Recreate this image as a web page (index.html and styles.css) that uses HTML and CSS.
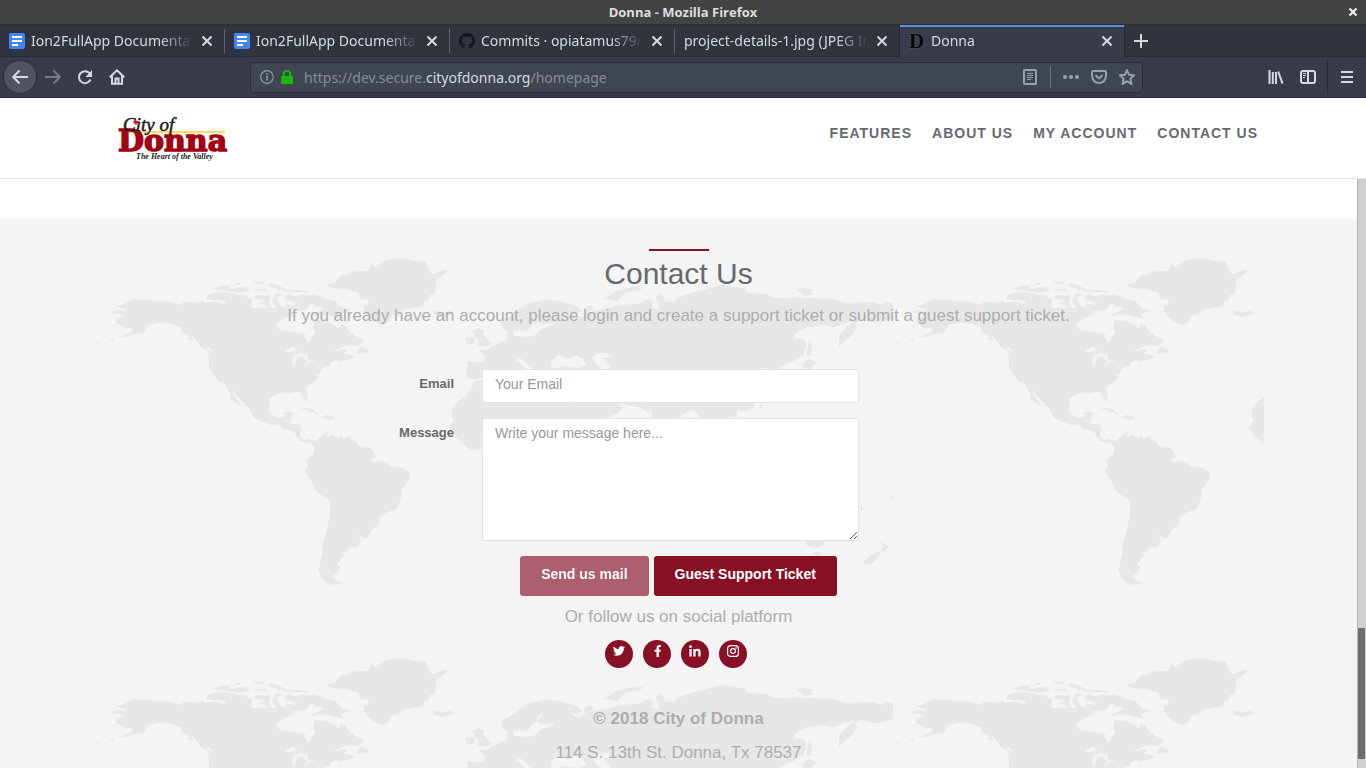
FILE: index.html
```html
<!DOCTYPE html>
<html lang="en">
<head>
<meta charset="utf-8">
<title>Donna</title>
<link rel="stylesheet" href="styles.css">
</head>
<body>
<div class="titlebar">
  <span class="titlebar-text">Donna - Mozilla Firefox</span>
  <button class="icon-btn titlebar-close" aria-label="Close window"><svg width="10" height="10" viewBox="0 0 10 10"><path d="M1.5 1.5l7 7M8.500 1.500l-7 7" stroke="#eee" stroke-width="2.200"/></svg></button>
</div>

<div class="tabs">
  <div class="tab">
    <svg class="favicon" width="16" height="16" viewBox="0 0 16 16"><rect width="16" height="16" rx="2" fill="#4285f4"/><path d="M3 4h10M3 8h10M3 12h6" stroke="#fff" stroke-width="2"/></svg>
    <span class="tab-label">Ion2FullApp Documentation</span>
    <button class="icon-btn tab-close" aria-label="Close tab"><svg width="10" height="10" viewBox="0 0 10 10"><path d="M.5 .5l9 9M9.500 .5l-9 9"/></svg></button>
  </div>
  <div class="tab">
    <svg class="favicon" width="16" height="16" viewBox="0 0 16 16"><rect width="16" height="16" rx="2" fill="#4285f4"/><path d="M3 4h10M3 8h10M3 12h6" stroke="#fff" stroke-width="2"/></svg>
    <span class="tab-label">Ion2FullApp Documentation</span>
    <button class="icon-btn tab-close" aria-label="Close tab"><svg width="10" height="10" viewBox="0 0 10 10"><path d="M.5 .5l9 9M9.500 .5l-9 9"/></svg></button>
  </div>
  <div class="tab">
    <svg class="favicon" width="16" height="16" viewBox="0 0 16 16"><path fill="#15171b" d="M8 0C3.580 0 0 3.580 0 8c0 3.540 2.290 6.530 5.470 7.590.4.070.55-.17.55-.38 0-.19-.01-.82-.01-1.490-2.010.37-2.530-.49-2.690-.94-.09-.23-.48-.94-.82-1.130-.28-.15-.68-.52-.01-.53.63-.01 1.080.58 1.230.82.72 1.210 1.870.87 2.330.66.070-.52.28-.87.51-1.070-1.780-.2-3.640-.89-3.640-3.950 0-.87.31-1.590.82-2.150-.08-.2-.36-1.020.08-2.120 0 0 .67-.21 2.200.82a7.600 7.600 0 0 1 4 0c1.530-1.040 2.200-.82 2.200-.82.44 1.100.16 1.920.08 2.120.51.56.82 1.270.82 2.150 0 3.070-1.870 3.750-3.650 3.950.29.25.54.73.54 1.480 0 1.070-.01 1.930-.01 2.200 0 .21.15.46.55.38A8 8 0 0 0 16 8c0-4.420-3.580-8-8-8z"/></svg>
    <span class="tab-label">Commits · opiatamus79/citydonna</span>
    <button class="icon-btn tab-close" aria-label="Close tab"><svg width="10" height="10" viewBox="0 0 10 10"><path d="M.5 .5l9 9M9.500 .5l-9 9"/></svg></button>
  </div>
  <div class="tab">
    <span class="tab-label">project-details-1.jpg (JPEG Image)</span>
    <button class="icon-btn tab-close" aria-label="Close tab"><svg width="10" height="10" viewBox="0 0 10 10"><path d="M.5 .5l9 9M9.500 .5l-9 9"/></svg></button>
  </div>
  <div class="tab tab-active">
    <svg class="favicon" width="16" height="16" viewBox="0 0 16 16"><text x="0" y="15" class="favicon-letter">D</text></svg>
    <span class="tab-label">Donna</span>
    <button class="icon-btn tab-close" aria-label="Close tab"><svg width="10" height="10" viewBox="0 0 10 10"><path d="M.5 .5l9 9M9.500 .5l-9 9"/></svg></button>
  </div>
  <button class="icon-btn new-tab" aria-label="New tab"><svg width="14" height="14" viewBox="0 0 14 14"><path d="M7 0v14M0 7h14" stroke="#d3dae3" stroke-width="2"/></svg></button>
</div>

<div class="toolbar">
  <button class="icon-btn back" aria-label="Back"><svg width="16" height="16" viewBox="0 0 16 16"><path d="M16 8H1.500M7.500 1.500L1.200 8l6.300 6.500" class="line"/></svg></button>
  <button class="icon-btn tool dim" aria-label="Forward"><svg width="16" height="16" viewBox="0 0 16 16"><path d="M0 8h14.500M8.500 1.500L14.800 8l-6.300 6.500" class="line"/></svg></button>
  <button class="icon-btn tool" aria-label="Reload"><svg width="16" height="16" viewBox="0 0 16 16"><path d="M13.500 10.500A6 6 0 1 1 12.500 4.200L14 6" class="line"/><path d="M15 1v7H8.500z" fill="#d3dae3"/></svg></button>
  <button class="icon-btn tool" aria-label="Home"><svg width="16" height="16" viewBox="0 0 16 16"><path d="M.8 8.300L8 1.300l7.200 7M3 7v7.700h10V7M6.500 14V9.500h3V14" class="line"/></svg></button>
  <div class="spring"></div>
  <div class="urlbar">
    <svg width="14" height="14" viewBox="0 0 14 14"><circle cx="7" cy="7" r="6.300" fill="none" stroke="#9196a1" stroke-width="1.200"/><path d="M7 6v4.500M7 3.200v1.600" stroke="#9196a1" stroke-width="1.600"/></svg>
    <svg width="12" height="14" viewBox="0 0 12 14"><path d="M2.800 7V4a3.200 3.200 0 0 1 6.400 0v3" fill="none" stroke="#12bc00" stroke-width="2"/><rect y="6" width="12" height="8" rx="1" fill="#12bc00"/></svg>
    <span class="url" role="textbox" aria-label="Address">https://dev.secure.<b>cityofdonna.org</b>/homepage</span>
    <svg width="14" height="16" viewBox="0 0 14 16"><rect x="1" y="1" width="12" height="14" rx="1" class="dimline"/><path d="M4 4.500h6M4 6.500h6M4 8.500h6M4 10.500h4" stroke="#9a9faa"/></svg>
    <span class="url-divider"></span>
    <svg width="16" height="16" viewBox="0 0 16 16" fill="#9a9faa"><circle cx="2" cy="8" r="2"/><circle cx="8" cy="8" r="2"/><circle cx="14" cy="8" r="2"/></svg>
    <svg width="16" height="16" viewBox="0 0 16 16"><path d="M2 2h12q1 0 1 1v4a7 7 0 0 1-14 0V3q0-1 1-1zM4.500 6.300L8 9.500l3.500-3.200" class="dimline"/></svg>
    <svg width="16" height="16" viewBox="0 0 16 16"><path d="M8 1.300l2.100 4.500 4.900.6-3.600 3.400.9 4.900L8 12.300l-4.300 2.400.9-4.900L1 6.400l4.900-.6z" class="dimline"/></svg>
  </div>
  <div class="spring"></div>
  <button class="icon-btn tool" aria-label="Library"><svg width="16" height="16" viewBox="0 0 16 16"><path d="M1.500 1v14M4.800 3v12M8 3v12M10.200 2.500l4.300 12.200" class="line"/></svg></button>
  <button class="icon-btn tool" aria-label="Sidebars"><svg width="16" height="16" viewBox="0 0 16 16"><rect x="1" y="2" width="14" height="12" rx="2" class="line"/><path d="M8 2v12" class="line"/><path d="M3 4.500h3M3 6.500h3M3 8.500h2" stroke="#d3dae3"/></svg></button>
  <span class="menu-divider"></span>
  <button class="icon-btn tool menu" aria-label="Menu"><svg width="12" height="12" viewBox="0 0 12 12"><path d="M0 1h12M0 6h12M0 11h12" stroke="#d3dae3" stroke-width="2"/></svg></button>
</div>

<header class="site-header">
  <div class="header-inner">
    <a href="#" class="logo" aria-label="City of Donna">
      <svg width="112" height="44" viewBox="0 0 112 44">
        <path d="M10 16h97" stroke="#ffdf52" stroke-width="2"/>
        <text x="0" y="35" class="logo-name">Donna</text>
        <text x="5" y="15" class="logo-city">City of</text>
        <path d="M15 6l2-2 2 1 2 0-3 4z" fill="#e11b22"/>
        <text x="18" y="43" class="logo-tag">The Heart of the Valley</text>
      </svg>
    </a>
    <nav class="site-nav">
      <a href="#">FEATURES</a>
      <a href="#">ABOUT US</a>
      <a href="#">MY ACCOUNT</a>
      <a href="#">CONTACT US</a>
    </nav>
  </div>
</header>

<div class="viewport">
  <main class="content">
    <section class="contact">
      <div class="container">
        <svg class="map" aria-hidden="true">
          <defs>
            <pattern id="world" width="800" height="400" patternUnits="userSpaceOnUse">
              <g transform="translate(-14 -9) scale(.33333)" fill="#e7e7e7">
                <path d="M104 198L128 194 148 183 165 176 175 182 205 181 270 186 300 194 312 186 360 187 366 182 376 187 398 187 404 184 438 193 430 180 400 180 378 176 386 162 402 158 436 157 460 160 470 165 500 165 504 175 514 178 516 204 562 204 558 194 540 192 552 184 550 178 520 176 532 164 556 168 568 164 572 174 566 186 576 204 590 204 576 186 580 172 592 176 600 196 620 204 614 192 646 194 642 184 620 182 614 168 630 162 652 172 660 164 710 164 740 178 768 184 776 196 788 204 812 210 790 220 780 222 796 238 780 234 750 226 720 222 700 228 690 226 712 216 732 206 720 200 700 200 708 190 690 192 680 210 640 214 636 224 662 232 630 228 610 236 586 254 600 270 640 276 676 282 674 292 684 308 692 306 696 290 706 278 700 262 704 240 740 244 770 262 778 264 786 250 822 285 850 300 838 316 806 318 784 320 762 334 790 328 804 330 790 342 820 346 818 354 776 366 768 360 750 368 748 380 730 380 720 394 722 402 708 406 714 416 676 446 684 470 682 488 672 476 662 456 640 454 630 460 605 458 590 462 568 476 568 512 574 522 590 534 612 530 614 516 638 516 634 540 628 550 660 554 664 560 660 590 672 600 688 596 698 602 712 600 740 576 744 596 750 584 770 590 774 598 780 586 792 594 805 592 815 584 812 600 830 606 840 620 864 620 880 634 888 652 870 662 884 666 896 660 920 670 940 682 956 680 976 688 990 702 988 720 964 750 962 780 948 810 930 814 900 830 898 850 880 866 862 892 850 896 836 882 843 906 834 920 804 924 802 936 784 936 794 944 770 974 782 980 774 994 760 1008 770 1022 788 1028 762 1035 742 1030 724 1012 716 990 722 960 728 940 728 910 740 870 748 830 752 786 740 774 712 758 692 720 675 694 682 680 680 662 700 642 702 620 694 606 682 610 662 602 640 574 612 568 596 552 576 556 540 544 516 526 512 510 486 484 454 448 464 472 488 502 470 492 448 474 452 462 432 430 416 424 386 382 388 344 382 334 360 318 340 290 332 286 342 304 326 298 324 284 306 276 304 264 270 250 232 248 204 256 190 278 118 293 160 272 150 264 134 264 106 248 110 236 136 226 92 216 110 210 136 212 136 206z"/>
                <path d="M735 133L762 130 780 108 806 102 820 92 866 93 874 72 886 80 914 62 960 55 1002 62 1036 64 1046 90 1058 102 1072 98 1088 88 1104 94 1084 108 1066 124 1072 138 1064 144 1064 164 1048 166 1046 184 1036 182 1028 198 980 206 960 220 936 226 922 250 904 254 872 238 850 214 852 196 866 194 864 178 846 180 834 158 800 146 770 148z"/>
                <path d="M398 148L420 138 444 136 454 148 474 142 500 142 508 154 480 158 460 156 440 152zM460 134L480 126 482 136zM516 126L540 123 556 130 530 132zM522 148h36v6h-36zM568 128L590 134 622 150 684 152 680 157 616 156 590 146 568 140zM580 164l18-4 10 6-18 6zM826 340L846 318 862 328 866 340zM1058 213L1078 212 1084 218 1112 212 1122 218 1104 228 1088 232 1062 224zM42 306l18 1-8 4zM84 304l10-4 8-6-2 10zM96 258l6-3 4 3-6 2zM658 508L680 504 702 510 718 524 696 518 678 510zM726 532L738 525 756 528 764 538 744 540zM774 538l6-4 2 5zM696 493l6 1-2 4zM698 542l6 1-2 5z"/>
                <path fill="#f4f4f4" d="M612 334L636 320 656 332 640 334 632 338zM638 377C634 350 645 342 660 340L682 344 684 362 676 362 670 352 660 350 652 354 644 377zM674 378L684 362 712 358 692 366zM378 320L390 324 398 334 392 336z"/>
              </g>
              <g transform="translate(366 -9) scale(.33333)" fill="#e7e7e7">
                <path d="M22 414L18 402 24 364 70 366 78 350 56 332 84 328 110 312 140 300 142 276 130 268 122 245 150 228 200 190 250 180 300 184 345 196 366 212 350 222 330 218 352 234 376 226 372 204 390 194 402 206 386 216 440 206 476 196 500 194 540 190 560 176 580 182 576 204 600 208 592 184 586 168 606 160 614 184 640 188 652 174 690 160 740 146 790 135 858 146 856 158 920 162 946 174 1000 172 1110 176 1160 190 1240 186 1262 194 1276 186 1298 190 1300 208 1298 238 1250 250 1200 240 1186 250 1190 262 1176 284 1136 320 1138 285 1160 262 1185 240 1150 250 1120 262 1090 256 1040 262 1005 280 1002 294 1030 296 1040 310 1034 340 1000 364 960 380 950 390 905 384 906 440 888 490 880 505 860 512 832 512 830 534 805 530 800 550 740 550 718 532 700 508 686 514 655 534 650 570 600 570 576 534 574 514 560 516 545 504 500 494 478 488 488 508 470 522 430 538 360 560 346 534 328 490 326 490 358 540 400 570 380 620 300 740 210 820 180 780 160 630 66 626 32 631 -10 595 -34 565 -20 540 -26 516 -12 490 24 460 46 422 80 420 100 400 120 370 140 364 180 388 80 408 46 418z"/>
                <path d="M16 294L36 290 46 300 36 312 20 312zM36 272L56 264 72 270 70 284 88 302 97 312 80 318 50 316 60 304 44 288zM433 176L470 152 520 140 550 140 540 150 500 156 470 184zM1008 148L1036 144 1062 150 1050 156 1060 166 1030 166zM1046 300L1056 322 1052 348 1040 346zM1030 368L1050 356 1070 366 1050 388 1030 384zM898 494l12-2-8 18-6-6zM1302 306l20 1-8 4zM1030 890L1066 902 1098 902 1088 918 1064 924 1042 918zM1060 936L1086 936 1072 950zM1260 896L1272 912 1288 918 1276 934 1260 934 1270 922zM1212 964L1240 942 1258 932 1262 942 1232 974 1212 972zM1196 798l16 10-6 4zM1286 778l10-10 6 2-12 10z"/>
                <path fill="#f4f4f4" d="M254 216L232 232 230 246 214 254 204 272 160 270 162 288 200 292 226 286 238 270 280 256 282 250 240 252 232 242zM164 352L178 352 196 368 218 380 214 390 196 386 178 368zM272 380L276 362 292 346 314 350 322 358 348 346 366 354 382 378 352 384 310 378 288 386zM396 354L408 340 440 338 456 352 432 354 434 366 450 376 448 388 422 388z"/>
              </g>
            </pattern>
          </defs>
          <rect width="100%" height="100%" fill="url(#world)"/>
        </svg>
        <div class="rule"></div>
        <h2>Contact Us</h2>
        <p class="lead">If you already have an account, please login and create a support ticket or submit a guest support ticket.</p>
        <form class="form">
          <label for="email">Email</label>
          <input id="email" type="email" placeholder="Your Email">
          <label for="message">Message</label>
          <textarea id="message" placeholder="Write your message here..."></textarea>
        </form>
        <div class="actions">
          <button class="btn btn-disabled" disabled>Send us mail</button>
          <button class="btn">Guest Support Ticket</button>
        </div>
        <p class="follow">Or follow us on social platform</p>
        <div class="social">
          <a href="#" aria-label="Twitter"><svg width="12" height="12" viewBox="0 0 24 24"><path fill="#fff" d="M24 4.600a10 10 0 0 1-2.800.8 5 5 0 0 0 2.100-2.700 10 10 0 0 1-3.100 1.200 4.900 4.900 0 0 0-8.400 4.500A14 14 0 0 1 1.700 3.100a4.900 4.900 0 0 0 1.500 6.600 5 5 0 0 1-2.200-.6 4.900 4.900 0 0 0 3.900 4.900 5 5 0 0 1-2.200.1 4.900 4.900 0 0 0 4.600 3.400A10 10 0 0 1 0 19.500 14 14 0 0 0 7.500 21.700c9.100 0 14.300-7.700 14-14.600A10 10 0 0 0 24 4.600z"/></svg></a>
          <a href="#" aria-label="Facebook"><svg width="12" height="12" viewBox="0 0 12 12"><path fill="#fff" d="M5.500 12V6.800h-2V4.700h2V3.200C5.500 1.200 6.700 0 8.500 0H10v2H9C8.200 2 7.900 2.400 7.900 3.100v1.600h2l-.3 2.100H7.900V12z"/></svg></a>
          <a href="#" aria-label="LinkedIn"><svg width="12" height="12" viewBox="0 0 12 12"><path fill="#fff" d="M.4 4h2.300v7.500H.4zM4.300 4h2.200v1C7 4.200 7.800 3.800 8.800 3.800c2.200 0 2.800 1.400 2.800 3.500v4.200H9.300V7.700c0-1-.1-2-1.200-2s-1.500.8-1.500 1.900v3.900H4.300z"/><circle cx="1.500" cy="1.700" r="1.400" fill="#fff"/></svg></a>
          <a href="#" aria-label="Instagram"><svg width="12" height="12" viewBox="0 0 12 12" fill="none" stroke="#fff"><rect x=".6" y=".6" width="10.800" height="10.800" rx="3" stroke-width="1.200"/><circle cx="6" cy="6" r="2.400" stroke-width="1.200"/><circle cx="9" cy="3" r=".4"/></svg></a>
        </div>
        <footer class="footer">
          <p class="copyright">© 2018 City of Donna</p>
          <p>114 S. 13th St. Donna, Tx 78537</p>
        </footer>
      </div>
    </section>
  </main>
  <div class="scrollbar"><div class="thumb"></div></div>
</div>
</body>
</html>
```

FILE: styles.css
```css
* { box-sizing: border-box; }

body {
  margin: 0;
  height: 100vh;
  display: flex;
  flex-direction: column;
  overflow: hidden;
  background: #fff;
  font-family: "Liberation Sans", Arial, sans-serif;
  color: #666a6d;
}

p, h2 { margin: 0; }

.icon-btn {
  display: flex;
  align-items: center;
  justify-content: center;
  flex: none;
  padding: 0;
  border: 0;
  background: none;
}

.titlebar,
.tabs,
.toolbar {
  flex: none;
  display: flex;
  align-items: center;
  font-family: "Noto Sans", sans-serif;
  font-size: 14px;
}

/* Window title */
.titlebar {
  height: 24px;
  padding: 0 8px 0 18px;
  background: #434343;
  color: #dedede;
  font-family: "Open Sans", "Noto Sans", sans-serif;
  font-weight: 700;
  font-size: 13px;
}
.titlebar-text { flex: 1; text-align: center; }

/* Tab strip */
.tabs {
  height: 33px;
  align-items: stretch;
  background: #2f343f;
  color: #d3dae3;
  border-top: 1px solid #2b2f3a;
  border-bottom: 1px solid #262a35;
}
.tab {
  display: flex;
  align-items: center;
  gap: 6px;
  flex: 0 1 225px;
  min-width: 0;
  padding: 0 13px 0 9px;
  background: linear-gradient(#5d626d, #5d626d) right center / 1px 24px no-repeat;
}
.tab:nth-child(4) { background: none; }
.tab-active {
  margin-bottom: -1px;
  padding-bottom: 3px;
  background: #383c4a;
  border-top: 2px solid #5294e2;
  box-shadow: -1px 0 #262a35;
  border-right: 1px solid #262a35;
  padding-right: 12px;
}
.favicon { flex: none; }
.favicon-letter {
  font: 700 21px "Liberation Serif", serif;
  fill: #050505;
  stroke: #50535c;
  stroke-width: 1px;
  paint-order: stroke;
}
.tab-label {
  flex: 1;
  min-width: 0;
  overflow: hidden;
  white-space: nowrap;
  mask-image: linear-gradient(to left, transparent 3px, #000 36px);
}
.tab-close path { stroke: #d3dae3; stroke-width: 2; }
.new-tab { width: 32px; }

/* Navigation toolbar */
.toolbar {
  height: 41px;
  padding: 0 3px;
  background: #383c4a;
  border-bottom: 1px solid #262a35;
}
.line { fill: none; stroke: #d3dae3; stroke-width: 2; }
.dimline { fill: none; stroke: #9a9faa; stroke-width: 2; }
.back {
  width: 34px;
  height: 34px;
  border-radius: 50%;
  background: #505461;
  border: 1px solid #2b2e39;
}
.tool { width: 32px; height: 32px; }
.dim { opacity: .4; }
.spring { flex: 2; }
.urlbar {
  flex: 15;
  display: flex;
  align-items: center;
  gap: 7px;
  height: 31px;
  padding: 0 4px 0 9px;
  background: #404552;
  border: 1px solid #2b2e39;
  border-radius: 4px;
}
.urlbar svg { flex: none; }
.urlbar svg + svg { margin-right: 4px; }
.url-divider ~ svg { margin: 0 3px 0 2px; }
.urlbar .url-divider ~ svg + svg { margin-right: 3px; }
.url { flex: 1; color: #878c98; }
.url b { font-weight: 400; color: #d3dae3; }
.url-divider { width: 1px; height: 22px; margin: 0 3px 0 6px; background: #6a6e7a; }
.menu-divider { width: 1px; height: 34px; margin: 0 3px; background: #2b2e39; }

/* Site header */
.site-header { flex: none; border-bottom: 1px solid #e7e7e7; background: #fff; }
.header-inner {
  max-width: 1170px;
  height: 80px;
  margin: 0 auto;
  padding-left: 20px;
  display: flex;
  align-items: center;
  justify-content: space-between;
}
.logo svg { display: block; overflow: visible; }
.logo-name {
  font: 700 30px "DejaVu Serif", serif;
  fill: #a30013;
  stroke: #a30013;
  stroke-width: 1.500px;
}
.logo-city { font: italic 400 19px "Liberation Serif", serif; fill: #1b1b1b; stroke: #1b1b1b; stroke-width: .5px; }
.logo-tag { font: italic 700 8px "Liberation Serif", serif; fill: #1b1b1b; }
.site-nav { display: flex; padding-bottom: 10px; }
.site-nav a {
  padding: 0 10px;
  color: #666a6d;
  font-size: 14px;
  font-weight: 700;
  letter-spacing: 1px;
  text-decoration: none;
}

/* Page area */
.viewport { flex: 1; min-height: 0; display: flex; }
.content { flex: 1; min-width: 0; overflow: hidden; padding-top: 40px; }
.contact { padding-top: 30px; background: #f4f4f4; }
.container {
  position: relative;
  max-width: 1170px;
  margin: 0 auto;
  padding-bottom: 40px;
  text-align: center;
}
.container > * { position: relative; }
.container > .map { position: absolute; inset: 0; width: 100%; height: 100%; }
.rule { width: 60px; height: 2px; margin: 0 auto; background: #871025; }
h2 { padding-top: 6px; font-size: 30px; font-weight: 400; line-height: 34px; }
.lead, .follow, .footer { font-size: 17px; line-height: 24px; color: #adadad; }
.lead { padding-top: 13px; }

.form {
  display: grid;
  grid-template-columns: 1fr 377px 1fr;
  row-gap: 15px;
  padding: 41px 16px 0 0;
}
.form label {
  grid-column: 1;
  padding: 7px 28px 0 0;
  text-align: right;
  font-size: 13px;
  font-weight: 700;
}
.form input,
.form textarea {
  grid-column: 2;
  width: 100%;
  padding: 6px 12px;
  border: 1px solid #e3e3e3;
  border-radius: 0;
  background: #fff;
  font: 14px "Liberation Sans", Arial, sans-serif;
  color: #555;
}
.form input { height: 34px; padding-bottom: 10px; }
.form textarea { display: block; height: 123px; resize: vertical; }
.form ::placeholder { color: #999; opacity: 1; }

.actions { display: flex; justify-content: center; gap: 5px; padding-top: 15px; }
.btn {
  height: 40px;
  padding: 0 21px 4px;
  border: 0;
  border-radius: 3px;
  background: #871025;
  color: #fff;
  font: 700 14px "Liberation Sans", Arial, sans-serif;
}
.btn-disabled { opacity: .65; }
.follow { padding-top: 9px; }
.social { display: flex; justify-content: center; gap: 10px; padding: 11px 5px 0 0; }
.social a {
  display: flex;
  align-items: center;
  justify-content: center;
  width: 28px;
  height: 28px;
  padding-bottom: 6px;
  border-radius: 50%;
  background: #871025;
}
.footer { padding-top: 39px; }
.footer p + p { padding-top: 10px; }
.copyright { font-weight: 700; }

.scrollbar {
  flex: none;
  display: flex;
  flex-direction: column;
  justify-content: flex-end;
  width: 9px;
  padding-bottom: 9px;
  background: #d0d0d0;
  border-left: 1px solid #b5b5b5;
}
.thumb { flex: 0 0 131px; margin-right: 1px; border-radius: 1px; background: #6e6e6e; }
```
